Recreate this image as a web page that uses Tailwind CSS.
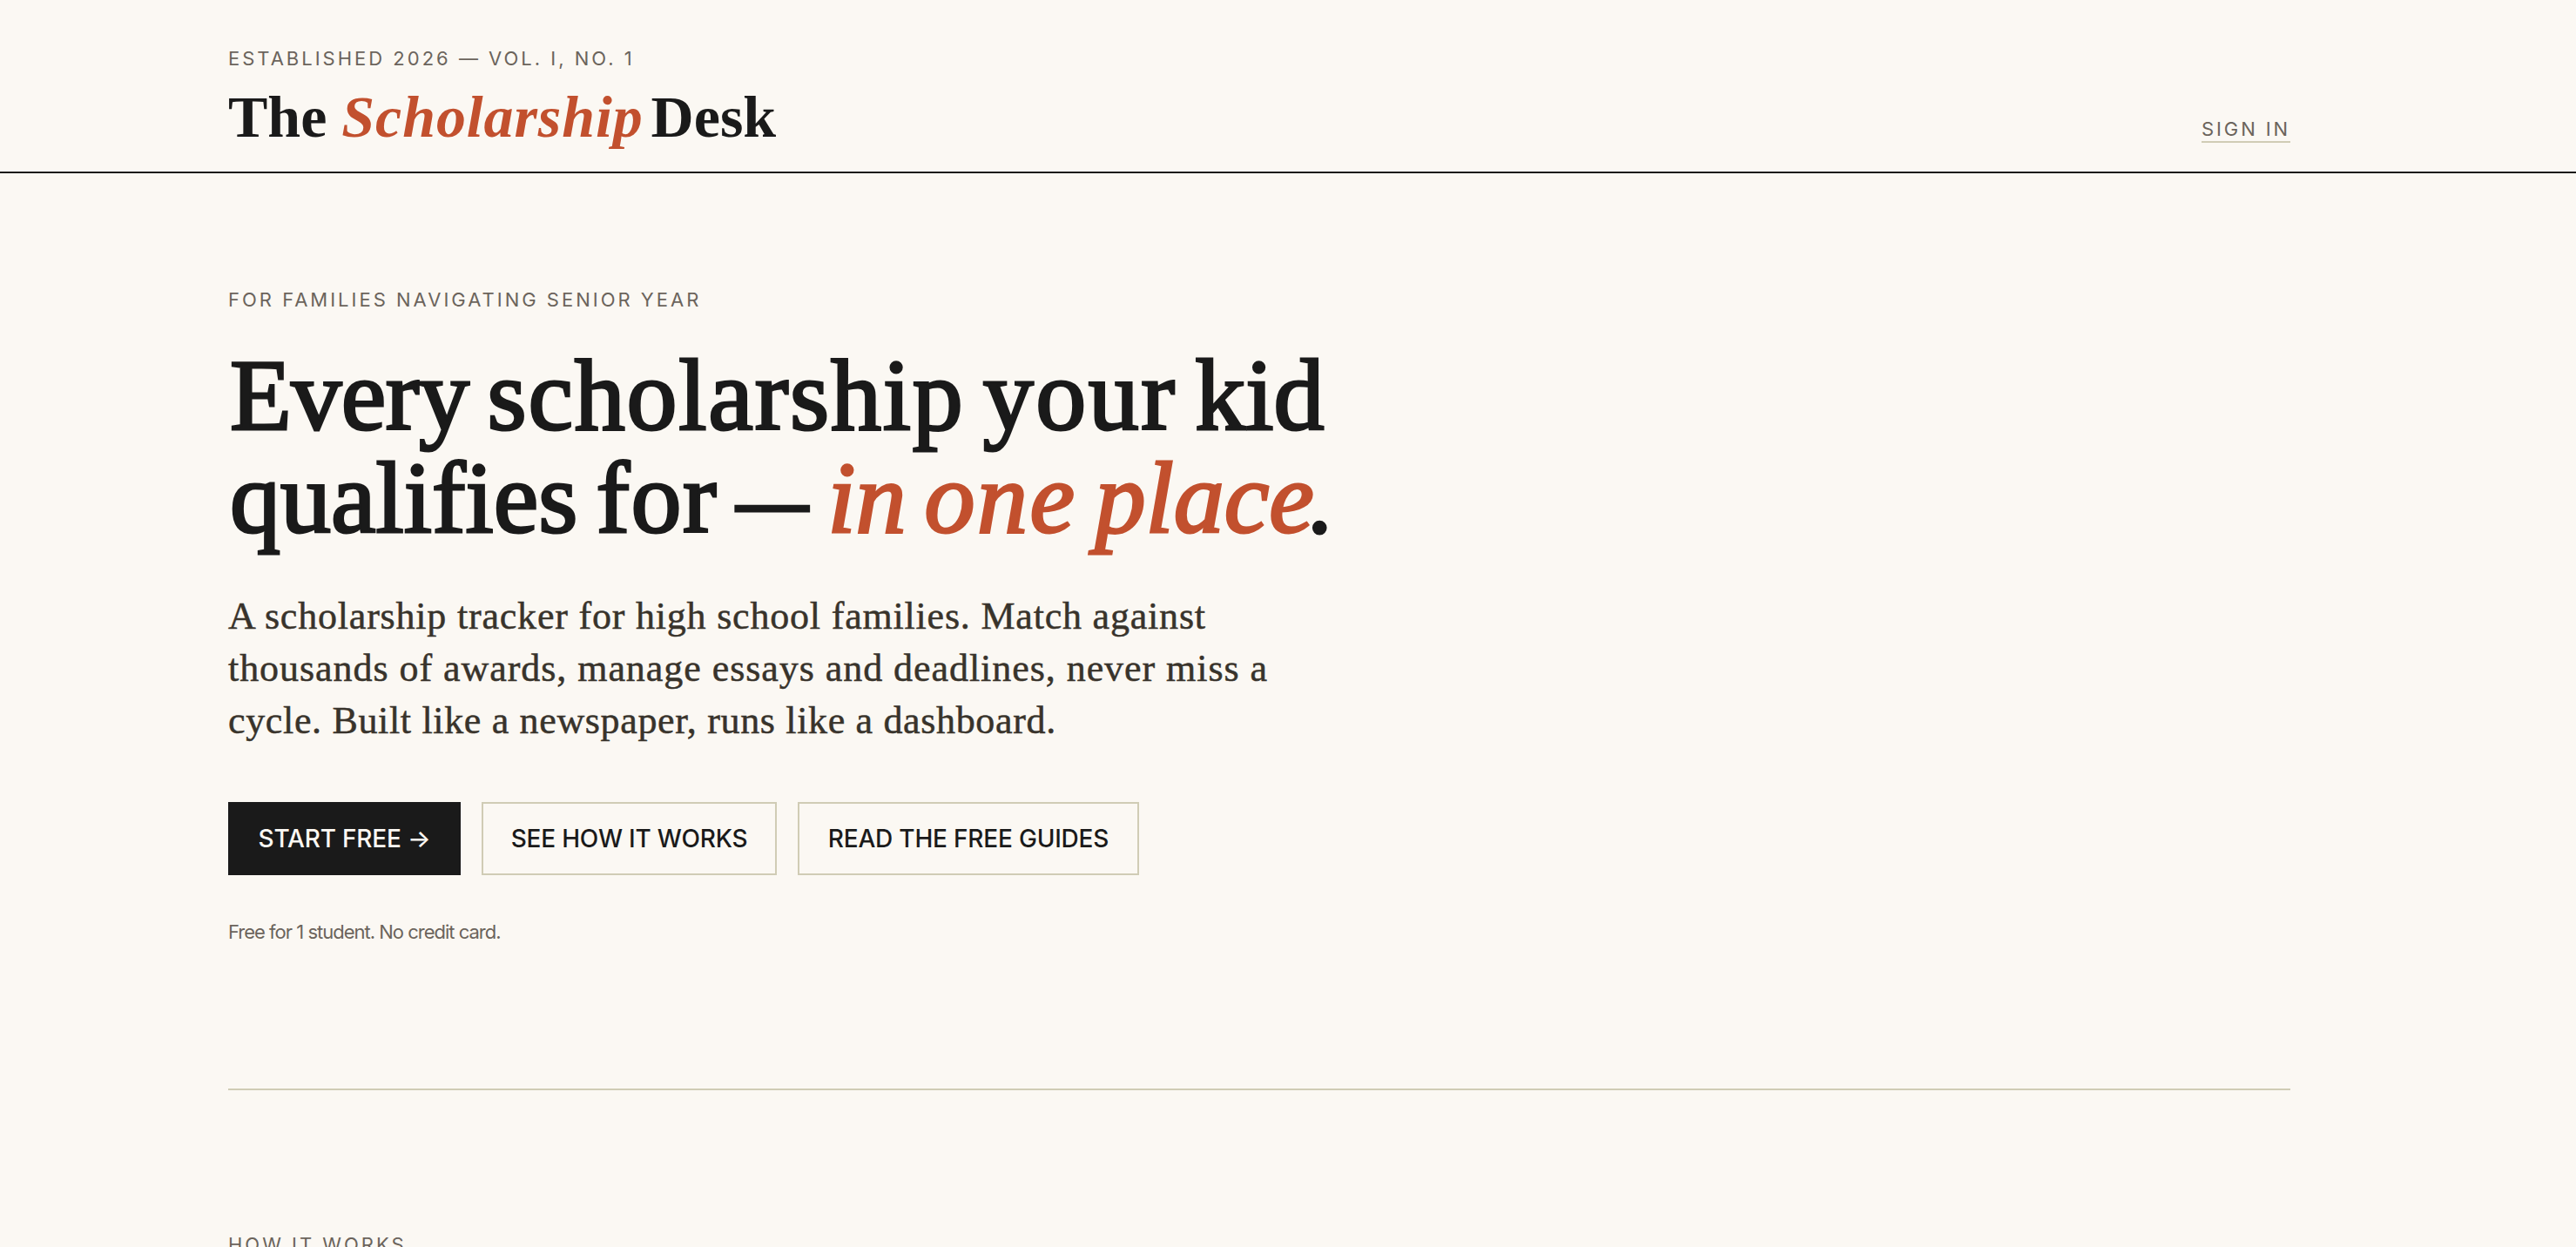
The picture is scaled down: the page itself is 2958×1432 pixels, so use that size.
<!DOCTYPE html>
<html lang="en">
<head>
    <meta charset="UTF-8">
    <meta name="viewport" content="width=device-width, initial-scale=1.0">
    <title>The Scholarship Desk</title>
    <script src="https://cdn.jsdelivr.net/npm/@tailwindcss/browser@4"></script>
</head>
<body class="bg-[#fbf8f3] text-[#1a1a1a] font-['Inter',sans-serif] h-screen overflow-hidden">

    <!-- Masthead -->
    <header class="h-[199px] border-b-2 border-[#1a1a1a]">
        <div class="w-[2368px] ml-[262px] h-full flex justify-between">
            <div class="pt-[50px]">
                <p class="text-[22px] leading-[34px] tracking-[3px] text-[#6b645c]">ESTABLISHED 2026 — VOL. I, NO. 1</p>
                <h1 class="mt-[12px] font-['Liberation_Serif',serif] font-bold text-[68px] leading-[76px] whitespace-nowrap">The <em class="text-[#c2502e] tracking-[0.9px]">Scholarship</em> <span class="-ml-2">Desk</span></h1>
            </div>
            <a href="#" class="mt-[134px] h-[30px] text-[22px] leading-[28px] tracking-[2.9px] text-[#6b645c] border-b-2 border-[#d0ccb5]">SIGN IN</a>
        </div>
    </header>

    <main class="w-[2368px] ml-[262px]">
        <!-- Hero -->
        <section class="h-[1053px] border-b-2 border-[#d0ccb5] pt-[128px]">
            <p class="text-[22px] leading-[34px] tracking-[3px] text-[#6b645c]">FOR FAMILIES NAVIGATING SENIOR YEAR</p>
            <h2 class="mt-[34px] pl-[2px] font-['Liberation_Serif',serif] text-[116px] leading-[118px] [word-spacing:-8px] whitespace-nowrap [-webkit-text-stroke:3px]">
                <span class="tracking-[-0.5px]">Every</span> <span class="tracking-[1.8px]">scholarship</span> <span class="tracking-[2.5px]">your</span> kid<br>
                qualifies <span class="tracking-[1.5px]">for</span> <span class="inline-block w-[84px] origin-left scale-x-[0.72]">—</span> <em class="text-[#c2502e]">in <span class="tracking-[2.5px]">one</span> place</em><span class="-ml-2">.</span>
            </h2>
            <p class="mt-[47px] font-['Liberation_Serif',serif] text-[44px] leading-[60px] text-[#38332b] whitespace-nowrap [-webkit-text-stroke:0.5px]">
                <span class="tracking-[0.8px]">A scholarship tracker for high school families. Match against</span><br>
                <span class="tracking-[0.95px]">thousands of awards, manage essays and deadlines, never miss a</span><br>
                <span class="tracking-[0.66px]">cycle. Built like a newspaper, runs like a dashboard.</span>
            </p>
            <div class="mt-[63px] flex gap-6 text-[28px] font-medium tracking-[-0.2px]">
                <a href="#" class="w-[267px] h-[84px] flex items-center justify-center bg-[#1a1a1a] text-[#fbf8f3]">START FREE →</a>
                <a href="#" class="w-[339px] h-[84px] flex items-center justify-center border-2 border-[#d0ccb5]">SEE HOW IT WORKS</a>
                <a href="#" class="w-[392px] h-[84px] flex items-center justify-center border-2 border-[#d0ccb5]">READ THE FREE GUIDES</a>
            </div>
            <p class="mt-[48px] text-[22px] leading-[34px] tracking-[-1px] text-[#6b645c]">Free for 1 student. No credit card.</p>
        </section>

        <!-- How it works -->
        <section class="pt-[160px]">
            <p class="text-[22px] leading-[34px] tracking-[3px] text-[#6b645c]">HOW IT WORKS</p>
        </section>
    </main>

</body>
</html>
